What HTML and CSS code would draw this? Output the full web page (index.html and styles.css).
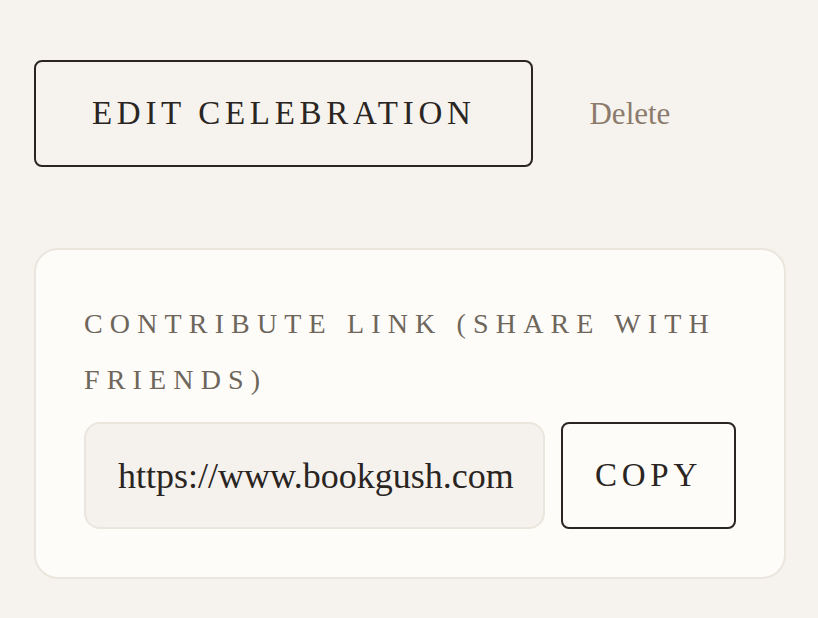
FILE: index.html
```html
<!DOCTYPE html>
<html>
<head>
<meta charset="utf-8">
<link rel="stylesheet" href="styles.css">
</head>
<body>
<div class="page">
  <div class="actions">
    <button class="btn btn-edit">EDIT CELEBRATION</button>
    <a class="delete" href="#">Delete</a>
  </div>
  <section class="card">
    <div class="label">Contribute link (share with friends)</div>
    <div class="link-row">
      <input class="link-input" type="text" readonly value="https://www.bookgush.com">
      <button class="btn btn-copy">COPY</button>
    </div>
  </section>
</div>
</body>
</html>
```
FILE: styles.css
```css
html, body {
  margin: 0;
  padding: 0;
  background: #f6f3ee;
  font-family: "Liberation Serif", "Times New Roman", serif;
  color: #2a2522;
}
.page {
  padding: 60px 32px 0 34px;
}
.actions {
  display: flex;
  align-items: center;
  gap: 56px;
}
.btn {
  font-family: "Liberation Serif", "Times New Roman", serif;
  font-size: 33px;
  letter-spacing: 4.7px;
  color: #2a2522;
  background: transparent;
  border: 2px solid #2a2522;
  border-radius: 8px;
  cursor: pointer;
}
.btn-edit {
  padding: 0 56px;
  height: 107px;
  line-height: 39px;
}
.delete {
  font-size: 31px;
  color: #8c7b6c;
  text-decoration: none;
}
.card {
  margin-top: 81px;
  background: #fdfcf9;
  border: 2px solid #ebe6dd;
  border-radius: 24px;
  padding: 46px 48px 48px;
}
.label {
  font-size: 28px;
  line-height: 56px;
  letter-spacing: 7.15px;
  text-transform: uppercase;
  color: #6e665b;
}
.link-row {
  display: flex;
  gap: 16px;
  margin-top: 14px;
  height: 107px;
}
.link-input {
  flex: 1;
  min-width: 0;
  box-sizing: border-box;
  height: 107px;
  font-family: "Liberation Serif", "Times New Roman", serif;
  font-size: 36px;
  color: #2a2522;
  background: #f5f2ed;
  border: 2px solid #ebe6dd;
  border-radius: 16px;
  padding: 0 28px 0 32px;
  outline: none;
}
.btn-copy {
  flex: 0 0 175px;
  box-sizing: border-box;
  padding: 0;
  height: 107px;
  letter-spacing: 4.8px;
  background: transparent;
}
```
